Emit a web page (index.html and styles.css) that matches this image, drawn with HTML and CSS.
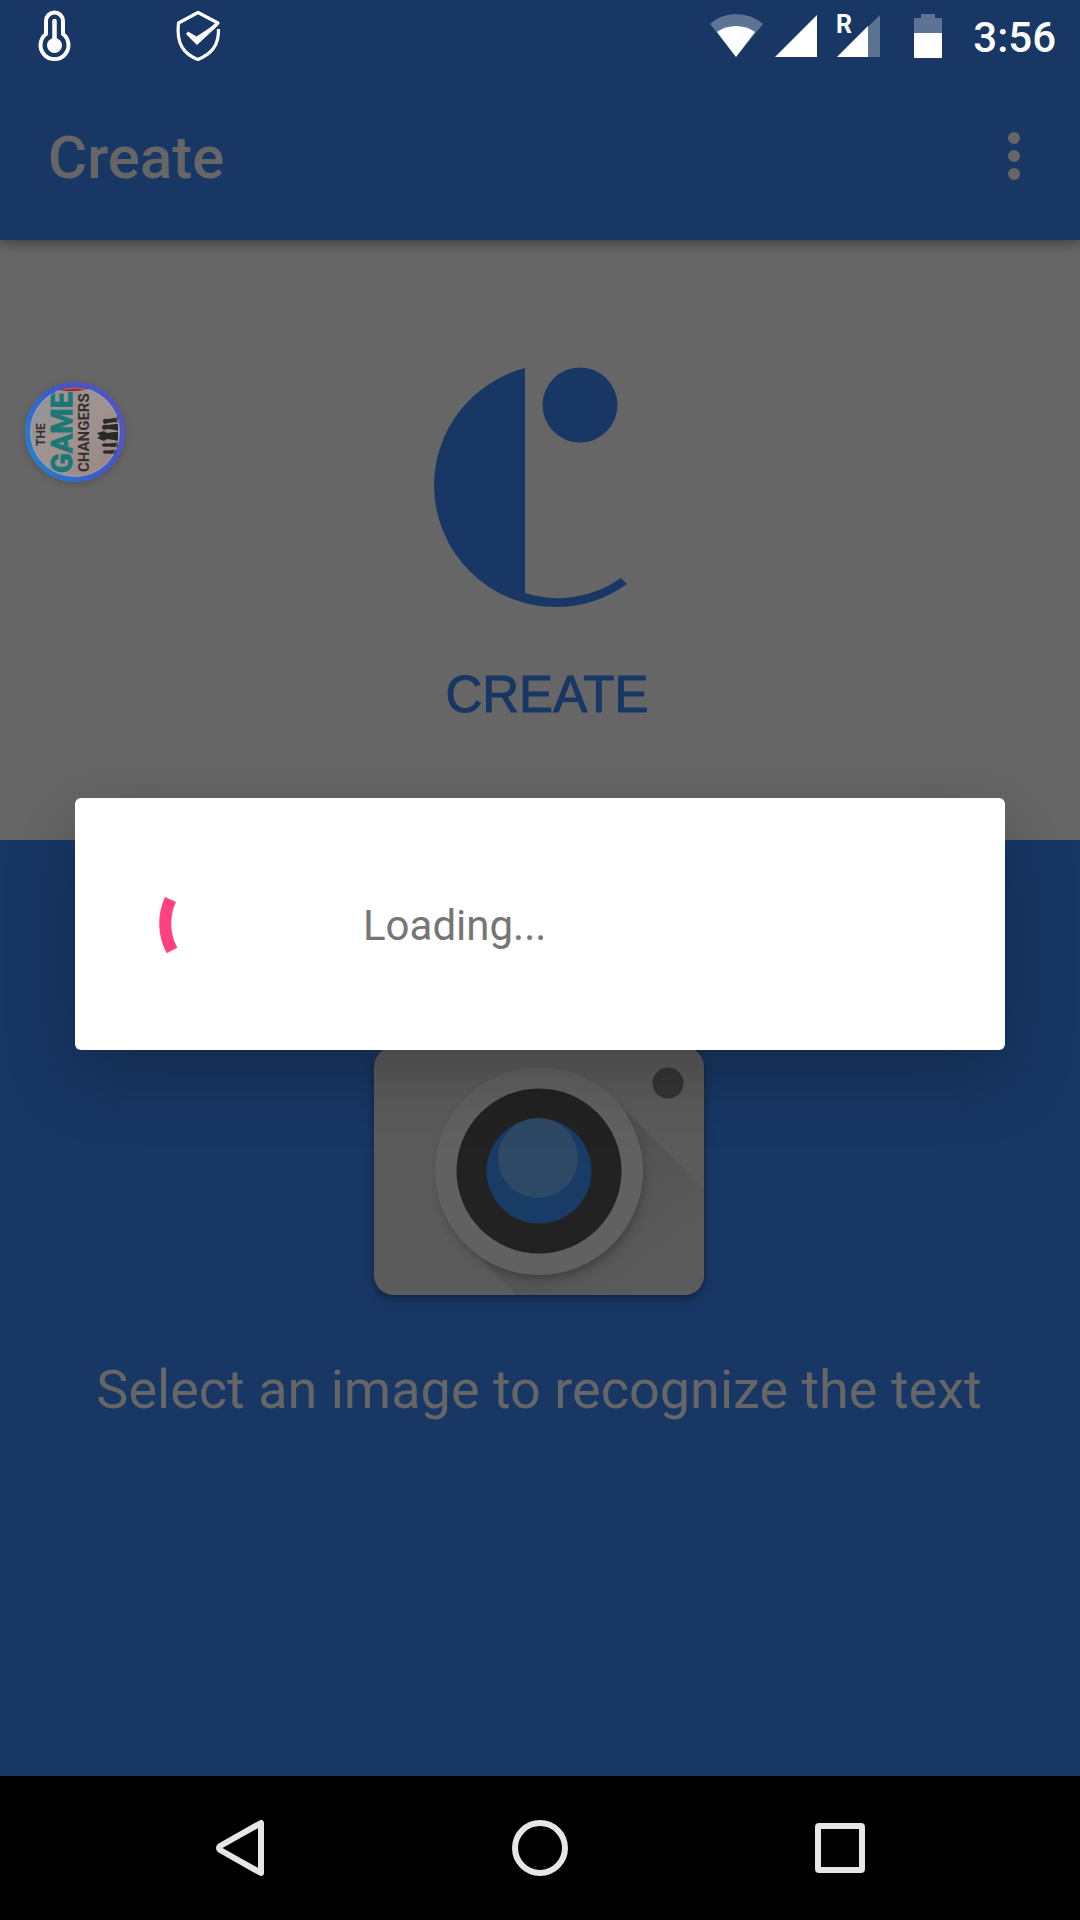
FILE: index.html
```html
<!DOCTYPE html>
<html lang="en">
<head>
<meta charset="utf-8">
<meta name="viewport" content="width=device-width, initial-scale=1">
<title>Create</title>
<link rel="stylesheet" href="styles.css">
</head>
<body>
<div class="screen">
  <header class="top">
    <div class="status">
      <svg class="status-icon thermometer" width="32" height="72" viewBox="0 0 32 72" aria-hidden="true">
        <path d="M8 34V21a8 8 0 0 1 17 0v13a14 14 0 1 1-17 0z" fill="none" stroke="#fff" stroke-width="4"/>
        <path d="M16.500 21v22" stroke="#fff" stroke-width="4.500" stroke-linecap="round"/>
        <circle cx="16.500" cy="45.500" r="7.500" fill="#fff"/>
      </svg>
      <svg class="status-icon" width="44" height="72" viewBox="0 0 44 72" aria-hidden="true">
        <path d="M42.500 29C43 46 35 54 22 59.500C8 54 0 44 2.500 23L22 12.500L42 23L23 39" fill="none" stroke="#fff" stroke-width="3.200" stroke-linejoin="round"/>
        <path d="M12 31.500l8.500 5L42 22.500v3L21 45L10 34z" fill="#fff"/>
      </svg>
      <div class="status-right">
        <svg width="54" height="72" viewBox="0 0 54 72" aria-hidden="true">
          <path d="M27 57L1 24Q12 14 27 14T54 24z" fill="#5d7393"/>
          <path d="M27 57L8 32Q16 26 27 26T46 32z" fill="#fff"/>
        </svg>
        <svg class="signal" width="42" height="72" viewBox="0 0 42 72" aria-hidden="true">
          <path d="M0 57L42 15V57z" fill="#fff"/>
        </svg>
        <svg class="roaming" width="43" height="72" viewBox="0 0 43 72" aria-hidden="true">
          <path d="M0 57L43 15V57z" fill="#5d7393"/>
          <path d="M0 57L31 26V57z" fill="#fff"/>
          <text x="-1" y="33" class="roaming-mark">R</text>
        </svg>
        <svg class="battery" width="28" height="72" viewBox="0 0 28 72" aria-hidden="true">
          <path d="M0 18h7v-4h14v4h7v40H0z" fill="#5d7393"/>
          <path d="M0 33h28v25H0z" fill="#fff"/>
        </svg>
        <time class="clock label">3:56</time>
      </div>
    </div>
    <div class="appbar">
      <h1 class="title label">Create</h1>
      <button class="more" type="button" aria-label="More options">
        <svg width="12" height="48" viewBox="0 0 12 48" fill="#666"><circle cx="6" cy="6" r="6"/><circle cx="6" cy="24" r="6"/><circle cx="6" cy="42" r="6"/></svg>
      </button>
    </div>
  </header>

  <main class="content">
    <section class="brand">
      <svg class="logo" width="194" height="240" viewBox="0 0 194 240" fill="#183764" aria-hidden="true">
        <path d="M92 0A122 122 0 0 0 1 117A122 122 0 0 0 123 239Q162 239 194 216L188 210A109 109 0 0 1 92 225z"/>
        <circle cx="147" cy="37" r="37.500"/>
      </svg>
      <p class="brand-name">CREATE</p>
    </section>
    <section class="picker">
      <button class="camera" type="button" aria-label="Choose an image">
        <svg width="330" height="248" viewBox="0 0 330 248">
          <defs>
            <clipPath id="body"><rect width="330" height="248" rx="20"/></clipPath>
            <linearGradient id="cast" x1="0.300" y1="0.300" x2="1" y2="1"><stop offset="0" stop-color="#4f4f4f"/><stop offset="0.800" stop-color="#5b5b5b"/></linearGradient>
            <filter id="soft" x="-20%" y="-20%" width="140%" height="140%"><feGaussianBlur stdDeviation="5"/></filter>
          </defs>
          <rect width="330" height="248" rx="20" fill="#5b5b5b"/>
          <g clip-path="url(#body)">
            <path d="M253 65L330 142V248H143L93 198z" fill="url(#cast)"/>
            <circle cx="167" cy="130" r="102" fill="#333" opacity=".6" filter="url(#soft)"/>
          </g>
          <circle cx="165" cy="124" r="104" fill="#616161"/>
          <circle cx="165" cy="124" r="82.500" fill="#222"/>
          <circle cx="165" cy="124" r="52.500" fill="#193c66"/>
          <circle cx="164" cy="111" r="40" fill="#2e4965"/>
          <circle cx="294" cy="36" r="15.500" fill="#353535"/>
        </svg>
      </button>
      <p class="hint">Select an image to recognize the text</p>
    </section>
  </main>

  <nav class="navbar" aria-label="System">
    <button class="key" type="button" aria-label="Back">
      <svg width="60" height="60" viewBox="0 0 60 60"><path d="M51 5V55L11 32.500Q7 30 11 27.500z"/></svg>
    </button>
    <button class="key" type="button" aria-label="Home">
      <svg width="60" height="60" viewBox="0 0 60 60"><circle cx="30" cy="30" r="25"/></svg>
    </button>
    <button class="key" type="button" aria-label="Recent apps">
      <svg width="60" height="60" viewBox="0 0 60 60"><rect x="8" y="8" width="44" height="44" rx="1"/></svg>
    </button>
  </nav>

  <svg class="bubble" width="100" height="100" viewBox="0 0 100 100" role="img" aria-label="The Game Changers">
    <defs>
      <linearGradient id="ring" x1="0" y1="0.800" x2="1" y2="0.300"><stop offset="0" stop-color="#2380d0"/><stop offset="0.500" stop-color="#3b5bd0"/><stop offset="1" stop-color="#5353c0"/></linearGradient>
      <linearGradient id="cover" x1="0" y1="0" x2="1" y2="1"><stop offset="0" stop-color="#8d9599"/><stop offset="0.500" stop-color="#a1938f"/><stop offset="1" stop-color="#958581"/></linearGradient>
      <clipPath id="disc"><circle cx="50" cy="50" r="46"/></clipPath>
    </defs>
    <circle cx="50" cy="50" r="46" fill="url(#cover)"/>
    <g clip-path="url(#disc)">
      <path d="M30 8Q48 11 64 7V0H30z" fill="#a2262c"/>
      <text class="cover-small" transform="translate(20 64) rotate(-90)">THE</text>
      <text class="cover-big" transform="translate(47 91) rotate(-90)">GAME</text>
      <text class="cover-mid" transform="translate(64 90) rotate(-90)">CHANGERS</text>
      <path d="M93 34v7l-3-1l-7 1q-5 2-5-2q0-3 5-2l7-1zM93 42v7l-3-1l-7-1q-6 2-6-1.500q0-3.500 6-2.500l7-1zM93 50v9l-4-1l-7-1l-3 2l-7-3l3-2l-3-3l7-2l3 2l7-1zM93 60v6l-3-1l-7-.5q-6 1-6-1.500t6-1.500l7-.5zM91 67v6l-3-1l-6-.5q-4 1-4-1.500t4-1.500l6-.5z" fill="#2b2928"/>
    </g>
    <circle cx="50" cy="50" r="47.500" fill="none" stroke="url(#ring)" stroke-width="5"/>
    <circle cx="50" cy="50" r="44" fill="none" stroke="#8ea6c0" stroke-width="1" opacity=".7"/>
  </svg>

  <div class="overlay">
    <div class="dialog" role="dialog" aria-label="Loading">
      <svg class="spinner" width="144" height="144" viewBox="0 0 144 144" aria-hidden="true">
        <path d="M20.500 47.500A57 57 0 0 0 22 98.500" fill="none" stroke="#ff4081" stroke-width="12"/>
      </svg>
      <p class="message label">Loading...</p>
    </div>
  </div>
</div>
</body>
</html>
```

FILE: styles.css
```css
* {
  box-sizing: border-box;
}

body,
h1,
p {
  margin: 0;
}

body {
  font-family: Roboto, "Noto Sans", sans-serif;
  background: #183764;
}

button {
  padding: 0;
  border: 0;
  background: none;
  cursor: pointer;
}

svg {
  display: block;
  overflow: visible;
}

.label {
  padding-top: 4px;
}

.screen {
  position: relative;
  display: flex;
  flex-direction: column;
  min-height: 100vh;
}

.top {
  position: relative;
  background: #183764;
  box-shadow: 0 4px 12px rgba(0, 0, 0, 0.35);
}

.status {
  display: flex;
  height: 72px;
  padding: 0 24px 0 38px;
}

.thermometer {
  margin-right: 106px;
}

.status-right {
  display: flex;
  align-items: center;
  margin-left: auto;
}

.signal {
  margin-left: 12px;
}

.roaming {
  margin-left: 20px;
}

.battery {
  margin: 0 31px 0 34px;
}

.roaming-mark {
  font-size: 25px;
  font-weight: 700;
  fill: #fff;
}

.clock {
  font-size: 42px;
  line-height: 50px;
  font-weight: 500;
  color: #fff;
}

.appbar {
  display: flex;
  align-items: center;
  justify-content: space-between;
  height: 168px;
  padding: 0 36px 0 48px;
}

.title {
  font-size: 60px;
  line-height: 72px;
  font-weight: 500;
  color: #666;
}

.more {
  display: grid;
  place-items: center;
  width: 60px;
  height: 96px;
}

.content {
  display: flex;
  flex: 1;
  flex-direction: column;
}

.brand {
  display: flex;
  flex-direction: column;
  align-items: center;
  height: 600px;
  padding-top: 128px;
  background: #666;
}

.logo {
  margin-right: 20px;
}

.brand-name {
  margin: 57px 0 0 14px;
  font: 51px/60px "Liberation Sans", Arial, sans-serif;
  color: #183764;
  -webkit-text-stroke: 1px #183764;
}

.picker {
  display: flex;
  flex: 1;
  flex-direction: column;
  align-items: center;
  padding: 207px 2px 0 0;
}

.camera {
  border-radius: 20px;
  box-shadow: 0 4px 8px rgba(0, 0, 0, 0.35);
}

.hint {
  margin-top: 60px;
  font-size: 54px;
  line-height: 70px;
  color: #666;
}

.navbar {
  display: grid;
  grid-template-columns: repeat(3, 1fr);
  height: 144px;
  padding: 0 90px;
  background: #000;
}

.key {
  display: grid;
  place-items: center;
}

.key svg {
  fill: none;
  stroke: #e6e6e6;
  stroke-width: 6px;
  stroke-linejoin: round;
}

.bubble {
  position: absolute;
  top: 382px;
  left: 25px;
  border-radius: 50%;
  box-shadow: 0 2px 8px rgba(0, 0, 0, 0.2);
}

.bubble text {
  font-family: Roboto, sans-serif;
  font-weight: 700;
  fill: #35302e;
}

.bubble .cover-small {
  font-size: 12px;
}

.bubble .cover-big {
  font-size: 29px;
  fill: #1d7776;
  stroke: #1d7776;
  stroke-width: 1px;
}

.bubble .cover-mid {
  font-size: 15px;
}

.overlay {
  position: absolute;
  inset: 72px 0 144px;
  display: flex;
  align-items: center;
  padding: 0 75px;
}

.dialog {
  display: flex;
  flex: 1;
  align-items: center;
  gap: 69px;
  padding: 54px 75px;
  border-radius: 6px;
  background: #fff;
  box-shadow: 0 24px 72px rgba(0, 0, 0, 0.24);
}

.message {
  font-size: 42px;
  line-height: 50px;
  color: #757575;
}
```
